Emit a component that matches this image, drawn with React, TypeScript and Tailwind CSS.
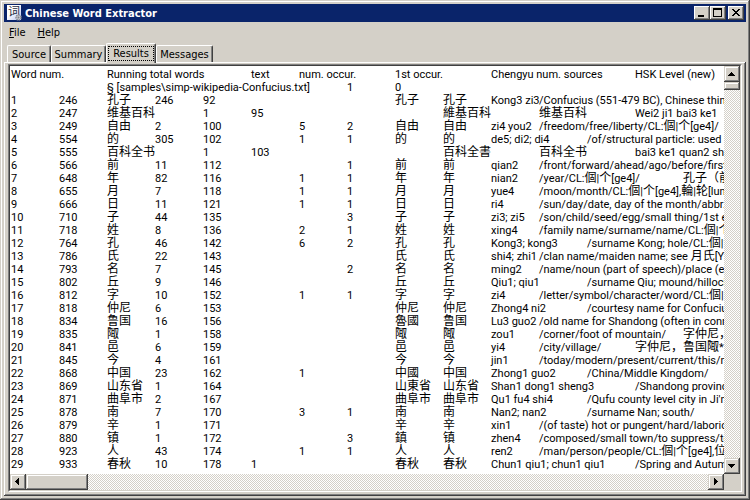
import React, { useState } from 'react';

const TOTAL_COLUMNS = 15;

const header = ['Word num.', '', 'Running total words', '', '', 'text', 'num. occur.', '', '1st occur.', '', 'Chengyu num. sources', '', '', 'HSK Level (new)'];

// One line per word; fields are separated by a broken bar, since definitions contain "|" and ",".
const lines = `
¦¦§ [samples\\simp-wikipedia-Confucius.txt]¦¦¦¦¦1¦0
1¦246¦孔子¦246¦92¦¦¦¦孔子¦孔子¦Kong3 zi3¦/Confucius (551-479 BC), Chinese thinker and philosopher
2¦247¦维基百科¦¦1¦95¦¦¦¦維基百科¦¦维基百科¦¦Wei2 ji1 bai3 ke1
3¦249¦自由¦2¦100¦¦5¦2¦自由¦自由¦zi4 you2¦/freedom/free/liberty/CL:個|个[ge4]/
4¦554¦的¦305¦102¦¦1¦1¦的¦的¦de5; di2; di4¦¦/of/structural particle: used before a noun
5¦555¦百科全书¦¦1¦103¦¦¦¦百科全書¦¦百科全书¦¦bai3 ke1 quan2 shu1
6¦566¦前¦11¦112¦¦¦1¦前¦前¦qian2¦/front/forward/ahead/ago/before/first/former
7¦648¦年¦82¦116¦¦1¦1¦年¦年¦nian2¦/year/CL:個|个[ge4]/¦¦¦孔子（前551年
8¦655¦月¦7¦118¦¦1¦1¦月¦月¦yue4¦/moon/month/CL:個|个[ge4],輪|轮[lun2]/
9¦666¦日¦11¦121¦¦1¦1¦日¦日¦ri4¦/sun/day/date, day of the month/abbr. for Japan
10¦710¦子¦44¦135¦¦¦3¦子¦子¦zi3; zi5¦/son/child/seed/egg/small thing/1st earthly branch
11¦718¦姓¦8¦136¦¦2¦1¦姓¦姓¦xing4¦/family name/surname/name/CL:個|个[ge4]/
12¦764¦孔¦46¦142¦¦6¦2¦孔¦孔¦Kong3; kong3¦¦/surname Kong; hole/CL:個|个[ge4]/
13¦786¦氏¦22¦143¦¦¦¦氏¦氏¦shi4; zhi1¦/clan name/maiden name; see 月氏[Yue4 zhi1]
14¦793¦名¦7¦145¦¦¦2¦名¦名¦ming2¦/name/noun (part of speech)/place (e.g. among winners)
15¦802¦丘¦9¦146¦¦¦¦丘¦丘¦Qiu1; qiu1¦¦/surname Qiu; mound/hillock/grave
16¦812¦字¦10¦152¦¦1¦1¦字¦字¦zi4¦/letter/symbol/character/word/CL:個|个[ge4]/
17¦818¦仲尼¦6¦153¦¦¦¦仲尼¦仲尼¦Zhong4 ni2¦¦/courtesy name for Confucius
18¦834¦鲁国¦16¦156¦¦¦¦魯國¦鲁国¦Lu3 guo2¦/old name for Shandong (often in connection
19¦835¦陬¦1¦158¦¦¦¦陬¦陬¦zou1¦/corner/foot of mountain/¦¦¦字仲尼，鲁国
20¦841¦邑¦6¦159¦¦¦¦邑¦邑¦yi4¦/city/village/¦¦字仲尼，鲁国陬*邑
21¦845¦今¦4¦161¦¦¦¦今¦今¦jin1¦/today/modern/present/current/this/now/
22¦868¦中国¦23¦162¦¦1¦¦中國¦中国¦Zhong1 guo2¦¦/China/Middle Kingdom/
23¦869¦山东省¦1¦164¦¦¦¦山東省¦山东省¦Shan1 dong1 sheng3¦¦¦/Shandong province
24¦871¦曲阜市¦2¦167¦¦¦¦曲阜市¦曲阜市¦Qu1 fu4 shi4¦¦/Qufu county level city in Ji'ning
25¦878¦南¦7¦170¦¦3¦1¦南¦南¦Nan2; nan2¦¦/surname Nan; south/
26¦879¦辛¦1¦171¦¦¦¦辛¦辛¦xin1¦/(of taste) hot or pungent/hard/laborious
27¦880¦镇¦1¦172¦¦¦3¦鎮¦镇¦zhen4¦/composed/small town/to suppress/to press down
28¦923¦人¦43¦174¦¦1¦1¦人¦人¦ren2¦/man/person/people/CL:個|个[ge4],位[wei4]/
29¦933¦春秋¦10¦178¦1¦¦¦春秋¦春秋¦Chun1 qiu1; chun1 qiu1¦¦¦/Spring and Autumn Period
`;

const rows = lines
  .trim()
  .split('\n')
  .map((line) => line.split('¦'));

function pad(cells: string[]) {
  return Array.from({ length: TOTAL_COLUMNS }, (_, i) => cells[i] ?? '');
}

/** Han characters are set one pixel larger than the Latin text around them. */
function Mixed({ text }: { text: string }) {
  return (
    <>
      {text.split(/([\u3000-\u9fff\uff00-\uffef]+)/).map((part, i) =>
        i % 2 ? (
          <span key={i} className="font-['Noto_Sans_CJK_SC',sans-serif] text-[12px] leading-[0px]">
            {part}
          </span>
        ) : (
          part
        ),
      )}
    </>
  );
}

const raised =
  'bg-[#d4d0c8] shadow-[inset_-1px_-1px_0_#404040,inset_1px_1px_0_#fff,inset_-2px_-2px_0_#808080]';
const raisedSoft =
  'bg-[#d4d0c8] shadow-[inset_-1px_-1px_0_#404040,inset_1px_1px_0_#d4d0c8,inset_-2px_-2px_0_#808080,inset_2px_2px_0_#fff]';
const track =
  'bg-[conic-gradient(#fff_25%,#d4d0c8_0_50%,#fff_0_75%,#d4d0c8_0)] bg-[length:2px_2px]';

function Arrow({ label, points }: { label: string; points: string }) {
  return (
    <button aria-label={label} className={`grid size-4 shrink-0 place-items-center ${raisedSoft}`}>
      <svg viewBox="0 0 16 16" className="size-4" shapeRendering="crispEdges">
        <polygon points={points} fill="#000" />
      </svg>
    </button>
  );
}

function TitleButton({ label, children }: { label: string; children: React.ReactNode }) {
  return (
    <button aria-label={label} className={`h-3.5 w-4 ${raised}`}>
      <svg viewBox="0 0 16 14" className="h-3.5 w-4" shapeRendering="crispEdges">
        {children}
      </svg>
    </button>
  );
}

function AppIcon() {
  return (
    <svg viewBox="0 0 16 16" className="size-4 shrink-0">
      <defs>
        <linearGradient id="page" x1="0" y1="0" x2="1" y2="1">
          <stop offset="0.4" stopColor="#ffffff" />
          <stop offset="1" stopColor="#b4c0ee" />
        </linearGradient>
      </defs>
      <rect x="0" y="0" width="14" height="15" fill="url(#page)" />
      <text x="1" y="11" fill="#2a2f40" className="font-['Noto_Sans_CJK_SC',sans-serif] text-[12px]">词</text>
      <circle cx="11.5" cy="12.5" r="2.5" fill="#c9ccd2" stroke="#8b9099" strokeWidth="1.5" strokeDasharray="1.5 0.75" />
      <circle cx="11.5" cy="12.5" r="1" fill="#7d828c" />
    </svg>
  );
}

const tabs = [
  { name: 'Source', width: 'w-[44px]' },
  { name: 'Summary', width: 'w-[55px]' },
  { name: 'Results', width: 'w-[50px]' },
  { name: 'Messages', width: 'w-[57px]' },
];

export default function App() {
  const [active, setActive] = useState('Results');

  return (
    <div className="flex h-screen flex-col bg-[#d4d0c8] p-1 font-['DejaVu_Sans_Condensed','Noto_Sans_CJK_SC',sans-serif] text-[11px] leading-[13px] text-black shadow-[inset_-1px_-1px_0_#404040,inset_1px_1px_0_#d4d0c8,inset_-2px_-2px_0_#808080,inset_2px_2px_0_#fff]">
      <header className="flex h-[18px] shrink-0 items-center bg-[#0a246a] pl-[3px] pr-0.5">
        <AppIcon />
        <h1 className="ml-0.5 flex-1 font-bold text-white">Chinese Word Extractor</h1>
        <TitleButton label="Minimize">
          <rect x="4" y="9" width="6" height="2" />
        </TitleButton>
        <TitleButton label="Maximize">
          <path d="M3 2h9v9H3zM4 4v6h7V4z" fillRule="evenodd" />
        </TitleButton>
        <span className="w-0.5" />
        <TitleButton label="Close">
          <path d="M4 3h2v1h1v1h2V4h1V3h2v1h-1v1h-1v1H9v1h1v1h1v1h1v1h-2V9H9V8H7v1H6v1H4V9h1V8h1V7h1V6H6V5H5V4H4z" />
        </TitleButton>
      </header>

      <nav className="flex h-[21px] shrink-0 items-center gap-3 pl-[5px]">
        <button><span className="underline">F</span>ile</button>
        <button><span className="underline">H</span>elp</button>
      </nav>

      <div role="tablist" className="flex h-[19px] shrink-0 items-end pl-[3px]">
        {tabs.map(({ name, width }) => {
          const selected = name === active;
          return (
            <button
              key={name}
              role="tab"
              aria-selected={selected}
              onClick={() => setActive(name)}
              className={`${width} rounded-t-[2px] border-l border-t border-r border-l-white border-t-white border-r-[#404040] bg-[#d4d0c8] shadow-[inset_-1px_0_0_#808080] ${
                selected ? 'z-10 -mb-px h-5 p-px pb-0.5' : 'h-[17px]'
              }`}
            >
              {selected ? <span className="block border border-dotted border-black">{name}</span> : name}
            </button>
          );
        })}
      </div>

      <main className="flex min-h-0 flex-1 flex-col px-1 pb-1 pt-0.5 shadow-[inset_-1px_-1px_0_#404040,inset_1px_1px_0_#fff,inset_-2px_-2px_0_#808080]">
        <div className="flex min-h-0 flex-1 flex-col border border-b-white border-l-[#808080] border-r-white border-t-[#808080] bg-white">
          <div className="flex min-h-0 flex-1 flex-col border border-b-[#d4d0c8] border-l-[#404040] border-r-[#d4d0c8] border-t-[#404040]">
            <div className="flex min-h-0 flex-1">
              <div className="min-w-0 flex-1 overflow-hidden pl-px pt-0.5">
                <table className="w-[720px] table-fixed border-collapse text-left font-['Roboto','Noto_Sans_CJK_SC',sans-serif]">
                  <thead>
                    <tr className="h-[13px]">
                      {pad(header).map((cell, i) => (
                        <th key={i} className="h-[13px] whitespace-nowrap p-0 font-normal">{cell}</th>
                      ))}
                    </tr>
                  </thead>
                  <tbody>
                    {rows.map((row, r) => (
                      <tr key={r} className="h-[13px]">
                        {pad(row).map((cell, i) => (
                          <td key={i} className="h-[13px] whitespace-nowrap p-0">
                            <div className="h-[13px]"><Mixed text={cell} /></div>
                          </td>
                        ))}
                      </tr>
                    ))}
                  </tbody>
                </table>
              </div>
              <div className={`flex w-4 shrink-0 flex-col ${track}`}>
                <Arrow label="Scroll up" points="7,6 8,6 8,7 9,7 9,8 10,8 10,9 11,9 11,10 4,10 4,9 5,9 5,8 6,8 6,7 7,7" />
                <div className={`h-2 shrink-0 ${raisedSoft}`} />
                <div className="flex-1" />
                <Arrow label="Scroll down" points="4,6 11,6 11,7 10,7 10,8 9,8 9,9 8,9 8,10 7,10 7,9 6,9 6,8 5,8 5,7 4,7" />
              </div>
            </div>
            <div className="flex h-4 shrink-0 bg-[#d4d0c8]">
              <div className={`flex flex-1 ${track}`}>
                <Arrow label="Scroll left" points="5,7 6,7 6,6 7,6 7,5 8,5 8,4 9,4 9,11 8,11 8,10 7,10 7,9 6,9 6,8 5,8" />
                <div className={`w-[62px] ${raisedSoft}`} />
                <div className="flex-1" />
                <Arrow label="Scroll right" points="6,4 7,4 7,5 8,5 8,6 9,6 9,7 10,7 10,8 9,8 9,9 8,9 8,10 7,10 7,11 6,11" />
              </div>
              <div className="w-4" />
            </div>
          </div>
        </div>
      </main>
    </div>
  );
}
